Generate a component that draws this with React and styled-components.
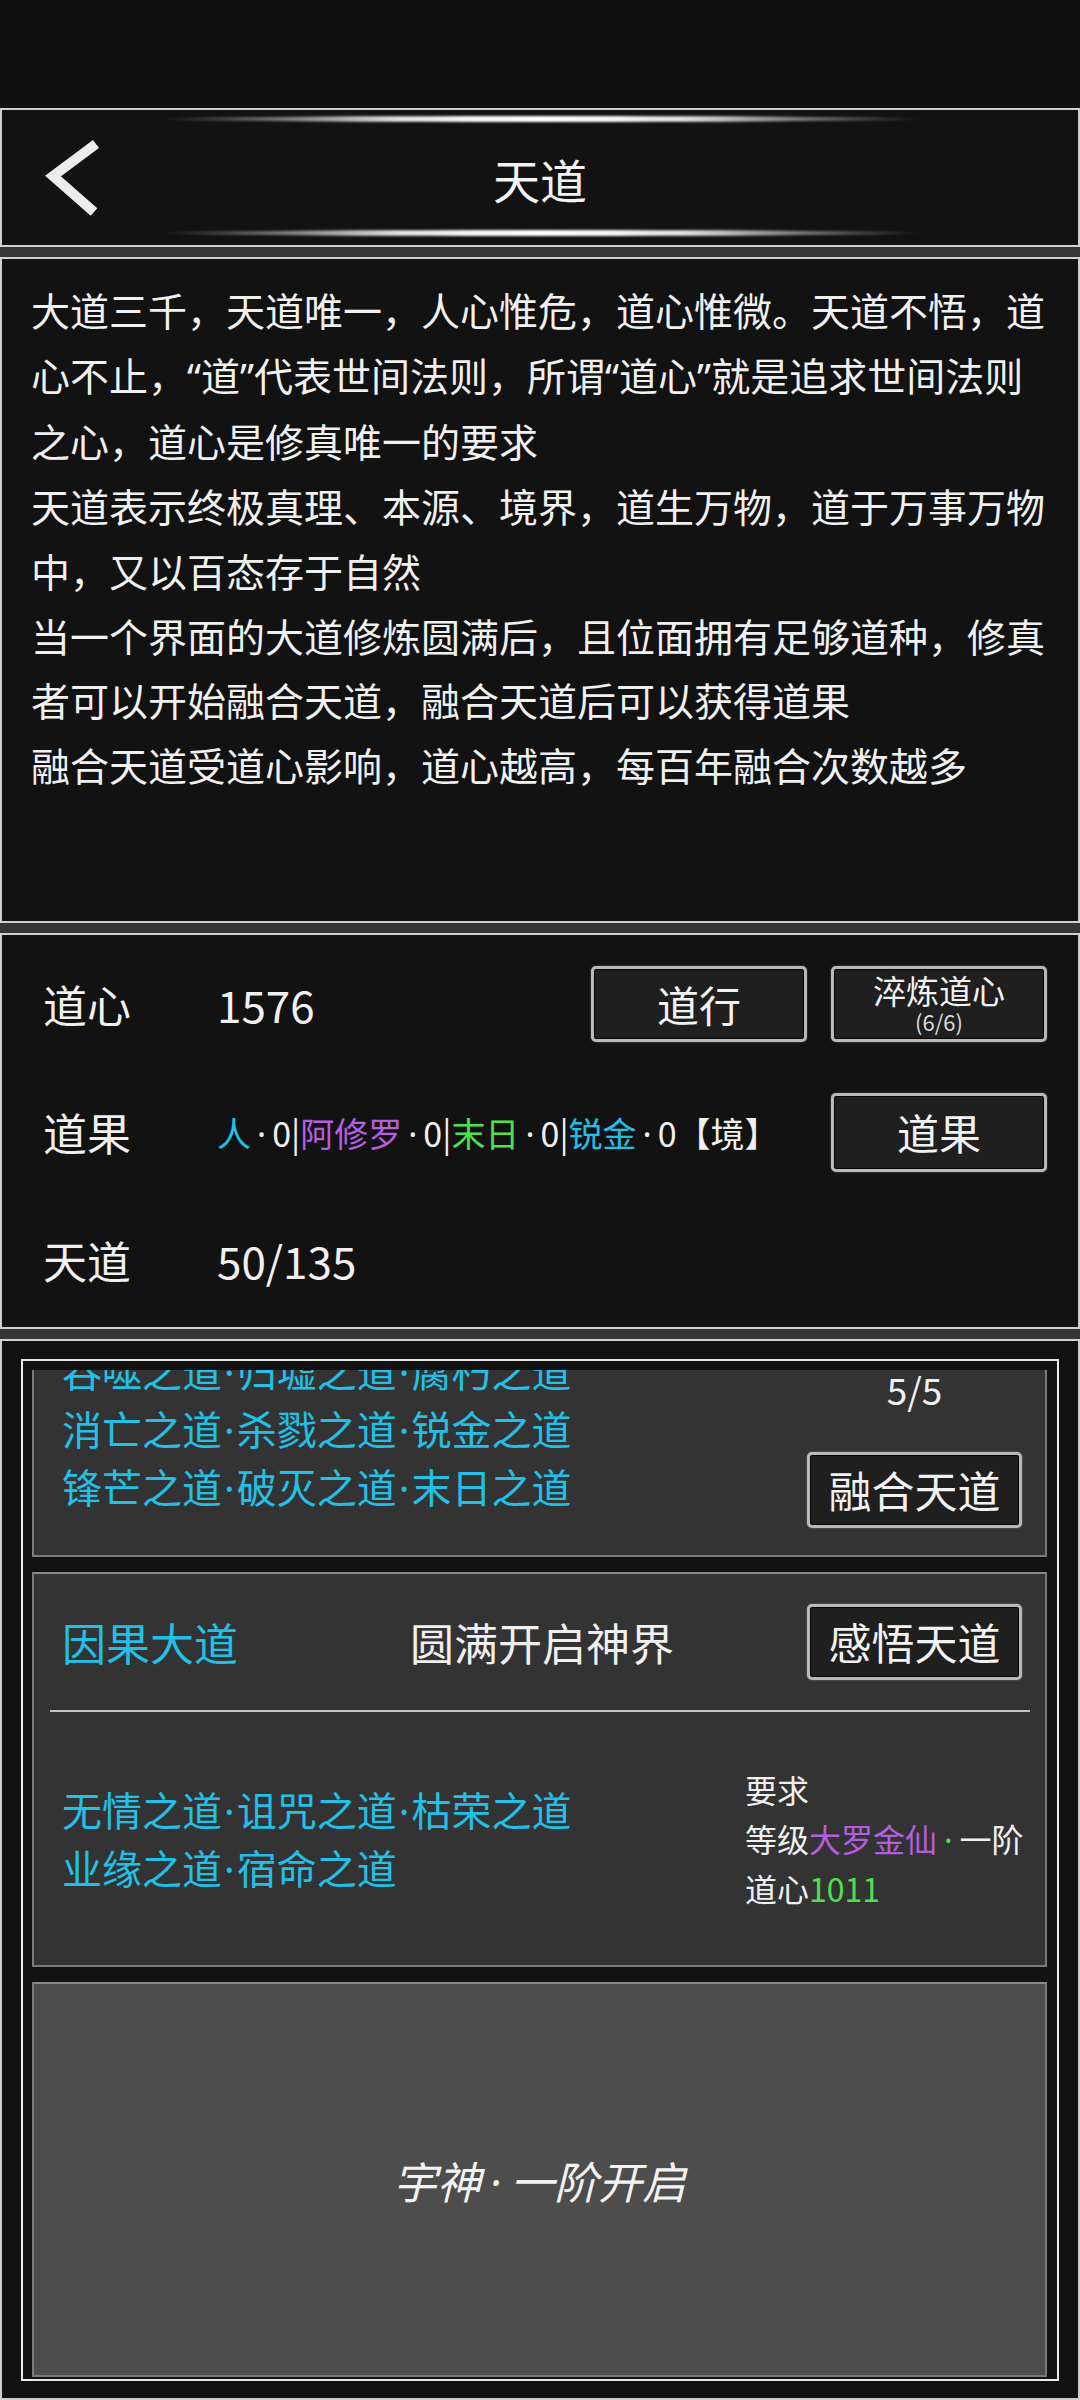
import React from "react";
import styled, { createGlobalStyle } from "styled-components";

const CYAN = "#22c0e6";
const PURPLE = "#b65ee0";
const GREEN = "#4fe04f";

const GlobalStyle = createGlobalStyle`
  * {
    box-sizing: border-box;
  }
  body {
    margin: 0;
    background: #111;
    color: #f0f0f0;
    font-family: "Noto Sans CJK SC", "Noto Sans", sans-serif;
  }
`;

const Screen = styled.div`
  width: 1080px;
  height: 2400px;
  display: flex;
  flex-direction: column;
  background: #111;
  overflow: hidden;
`;

const StatusBar = styled.div`
  height: 108px;
  flex-shrink: 0;
  background: #111;
`;

const Panel = styled.section`
  flex-shrink: 0;
  height: ${(p) => p.$h}px;
  border: 2px solid #cfcfcf;
  background: #121212;
`;

const Band = styled.div`
  height: 10px;
  flex-shrink: 0;
  background: #363636;
`;

// proportional punctuation (quotes, middots) like the game's font
const Latin = styled.span`
  font-family: "Noto Sans", "Liberation Sans", sans-serif;
  color: ${(p) => p.$color || "inherit"};
  padding: 0 ${(p) => p.$gap || 0}px;
`;

const withPunct = (text, dotGap = 0) =>
  text.split(/([“”·])/).map((part, i) =>
    /^[“”·]$/.test(part) ? (
      <Latin key={i} $gap={part === "·" ? dotGap : 0}>
        {part}
      </Latin>
    ) : (
      part
    )
  );

/* header */

const Header = styled(Panel)`
  display: flex;
  flex-direction: column;
  padding: 6px 0 9px;
`;

const Glow = styled.div`
  height: 6px;
  margin: 0 151px 0 153px;
  border-radius: 50%;
  background: linear-gradient(
    90deg,
    rgba(255, 255, 255, 0) 0%,
    rgba(255, 255, 255, 0.3) 12%,
    rgba(255, 255, 255, 0.9) 32%,
    #fff 50%,
    rgba(255, 255, 255, 0.9) 68%,
    rgba(255, 255, 255, 0.3) 88%,
    rgba(255, 255, 255, 0) 100%
  );
  filter: blur(1px);
`;

const TitleRow = styled.div`
  flex: 1;
  display: grid;
  grid-template-columns: 1fr auto 1fr;
  align-items: center;
  padding-top: 4px;
`;

const Back = styled.button`
  justify-self: start;
  margin-left: 40px;
  padding: 0;
  border: 0;
  background: none;
  display: flex;
`;

const Title = styled.h1`
  margin: 0;
  font-size: 47px;
  font-weight: 400;
  color: #f2f2f2;
`;

/* description */

const Description = styled(Panel)`
  padding: 18px 16px 0 29px;
`;

const Para = styled.p`
  margin: 0;
  font-size: 39px;
  line-height: 64.7px;
  color: #f0f0f0;
  white-space: nowrap;
`;

/* stats */

const Stats = styled(Panel)`
  display: flex;
  flex-direction: column;
  padding: 5px 31px 0 41px;
`;

const StatRow = styled.div`
  height: 128px;
  display: flex;
  align-items: center;
`;

const Label = styled.span`
  width: 174px;
  flex-shrink: 0;
  font-size: 44px;
  color: #f0f0f0;
`;

const Value = styled.span`
  flex: 1;
  font-size: ${(p) => p.$size || 44}px;
  color: #f0f0f0;
  white-space: nowrap;
`;

const Tag = styled.span`
  color: ${(p) => p.$color || "#f0f0f0"};
`;

const Actions = styled.div`
  display: flex;
  gap: 24px;
`;

const Button = styled.button`
  width: ${(p) => p.$w || 216}px;
  height: ${(p) => p.$h || 76}px;
  flex-shrink: 0;
  padding: 0;
  display: flex;
  flex-direction: column;
  align-items: center;
  justify-content: center;
  background: #1f1f1f;
  color: #f2f2f2;
  border: 3px solid #b9b9b9;
  border-radius: 5px;
  box-shadow: inset 0 0 0 1px #050505, 0 0 2px rgba(255, 255, 255, 0.35);
  font-family: inherit;
  font-size: ${(p) => p.$size || 42}px;
  line-height: 1.06;
`;

const SubText = styled.span`
  font-size: 22px;
  line-height: 1.2;
  color: #dcdcdc;
`;

/* lower list */

const Lower = styled(Panel)`
  display: flex;
  padding: 18px 19px 17px;
`;

const Frame = styled.div`
  flex: 1;
  display: flex;
  flex-direction: column;
  border: 2px solid #e8e8e8;
  padding: 9px 10px 2px 9px;
`;

const Viewport = styled.div`
  flex: 1;
  overflow: hidden;
  display: flex;
  flex-direction: column;
  justify-content: flex-end;
  gap: 15px;
`;

const Card = styled.div`
  flex-shrink: 0;
  height: 395px;
  display: flex;
  flex-direction: column;
  background: ${(p) => p.$bg || "#333"};
  border: 2px solid #7a7a7a;
  border-top-color: #8a8a8a;
`;

const CardHeader = styled.div`
  height: 136px;
  display: grid;
  grid-template-columns: 1fr auto 1fr;
  align-items: center;
  padding: 0 23px 0 28px;
`;

const DaoName = styled.span`
  font-size: 44px;
  color: ${CYAN};
`;

const CardTitle = styled.span`
  font-size: 44px;
  color: #f0f0f0;
`;

const HeaderAction = styled.div`
  justify-self: end;
`;

const Divider = styled.div`
  height: 2px;
  margin: 0 15px 0 16px;
  background: #c4c4c4;
`;

const CardBody = styled.div`
  flex: 1;
  display: grid;
  grid-template-columns: 1fr auto;
  align-items: center;
  padding-left: 28px;
`;

const DaoList = styled.div`
  font-size: 40px;
  line-height: 57px;
  color: ${CYAN};
  white-space: nowrap;
`;

const Requirements = styled.div`
  width: 300px;
  font-size: 32px;
  line-height: 49px;
  color: #f0f0f0;
  white-space: nowrap;
`;

const FuseColumn = styled.div`
  align-self: end;
  display: flex;
  flex-direction: column;
  align-items: center;
  gap: 39px;
  margin: 0 23px 27px 0;
`;

const Count = styled.span`
  font-size: 37px;
  line-height: 48px;
  color: #f0f0f0;
`;

const LockedCard = styled(Card)`
  align-items: center;
  justify-content: center;
`;

const LockedText = styled.span`
  font-size: 44px;
  font-style: italic;
  color: #f2f2f2;
`;

const Chevron = () => (
  <svg width="60" height="80" viewBox="0 0 60 80">
    <path
      d="M54 6 L11 38 L52 74"
      fill="none"
      stroke="#ececec"
      strokeWidth="10"
      strokeLinejoin="miter"
    />
  </svg>
);

const description = [
  "大道三千，天道唯一，人心惟危，道心惟微。天道不悟，道",
  "心不止，“道”代表世间法则，所谓“道心”就是追求世间法则",
  "之心，道心是修真唯一的要求",
  "天道表示终极真理、本源、境界，道生万物，道于万事万物",
  "中，又以百态存于自然",
  "当一个界面的大道修炼圆满后，且位面拥有足够道种，修真",
  "者可以开始融合天道，融合天道后可以获得道果",
  "融合天道受道心影响，道心越高，每百年融合次数越多",
];

const fruits = [
  { name: "人", color: CYAN },
  { name: "阿修罗", color: PURPLE },
  { name: "末日", color: GREEN },
  { name: "锐金", color: CYAN },
];

const App = () => {
  return (
    <Screen>
      <GlobalStyle />
      <StatusBar />

      <Header $h={139}>
        <Glow />
        <TitleRow>
          <Back aria-label="返回">
            <Chevron />
          </Back>
          <Title>天道</Title>
          <span />
        </TitleRow>
        <Glow />
      </Header>

      <Band />

      <Description $h={666}>
        {description.map((line) => (
          <Para key={line}>{withPunct(line)}</Para>
        ))}
      </Description>

      <Band />

      <Stats $h={396}>
        <StatRow>
          <Label>道心</Label>
          <Value>1576</Value>
          <Actions>
            <Button>道行</Button>
            <Button $size={33}>
              淬炼道心
              <SubText>(6/6)</SubText>
            </Button>
          </Actions>
        </StatRow>
        <StatRow>
          <Label>道果</Label>
          <Value $size={34}>
            {fruits.map((f, i) => (
              <React.Fragment key={f.name}>
                {i > 0 && "|"}
                <Tag $color={f.color}>{f.name}</Tag>
                <Latin $gap={6}>·</Latin>0
              </React.Fragment>
            ))}
            【境】
          </Value>
          <Button $h={79}>道果</Button>
        </StatRow>
        <StatRow>
          <Label>天道</Label>
          <Value>50/135</Value>
        </StatRow>
      </Stats>

      <Band />

      <Lower $h={1061}>
        <Frame>
          <Viewport>
            <Card>
              <CardHeader>
                <DaoName>毁灭大道</DaoName>
                <CardTitle>圆满开启神界</CardTitle>
                <HeaderAction>
                  <Button $w={215} $size={43}>
                    感悟天道
                  </Button>
                </HeaderAction>
              </CardHeader>
              <Divider />
              <CardBody>
                <DaoList>
                  <div>{withPunct("吞噬之道·归墟之道·腐朽之道", 2)}</div>
                  <div>{withPunct("消亡之道·杀戮之道·锐金之道", 2)}</div>
                  <div>{withPunct("锋芒之道·破灭之道·末日之道", 2)}</div>
                </DaoList>
                <FuseColumn>
                  <Count>5/5</Count>
                  <Button $w={215} $size={43}>
                    融合天道
                  </Button>
                </FuseColumn>
              </CardBody>
            </Card>

            <Card>
              <CardHeader>
                <DaoName>因果大道</DaoName>
                <CardTitle>圆满开启神界</CardTitle>
                <HeaderAction>
                  <Button $w={215} $size={43}>
                    感悟天道
                  </Button>
                </HeaderAction>
              </CardHeader>
              <Divider />
              <CardBody>
                <DaoList>
                  <div>{withPunct("无情之道·诅咒之道·枯荣之道", 2)}</div>
                  <div>{withPunct("业缘之道·宿命之道", 2)}</div>
                </DaoList>
                <Requirements>
                  <div>要求</div>
                  <div>
                    等级<Tag $color={PURPLE}>大罗金仙</Tag>
                    <Latin $color={GREEN} $gap={7}>
                      ·
                    </Latin>
                    一阶
                  </div>
                  <div>
                    道心<Tag $color={GREEN}>1011</Tag>
                  </div>
                </Requirements>
              </CardBody>
            </Card>

            <LockedCard $bg="#4d4d4d">
              <LockedText>{withPunct("宇神·一阶开启", 9)}</LockedText>
            </LockedCard>
          </Viewport>
        </Frame>
      </Lower>
    </Screen>
  );
};

export default App;
